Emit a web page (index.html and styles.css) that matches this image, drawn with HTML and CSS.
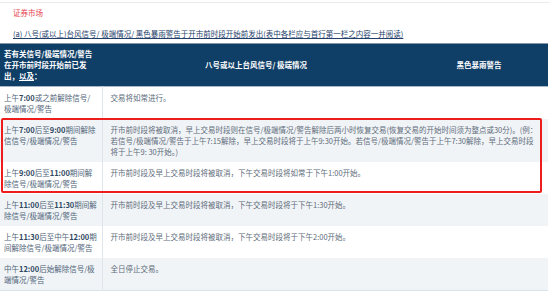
FILE: index.html
```html
<!DOCTYPE html>
<html lang="zh">
<head>
<meta charset="utf-8">
<link rel="stylesheet" href="styles.css">
</head>
<body>
<div class="page">
  <div class="title">证券市场</div>
  <div class="subtitle"><u>(a) 八号(或以上)台风信号/ 极端情况/ 黑色暴雨警告于开市前时段开始前发出(表中各栏应与首行第一栏之内容一并阅读)</u></div>
  <div class="table-wrap">
    <table class="grid">
      <colgroup><col class="c1"><col class="c2"><col class="c3"></colgroup>
      <thead>
        <tr>
          <th class="h-left">若有关信号/极端情况/警告<br>在开市前时段开始前已发<br>出，<u>以及</u>：</th>
          <th class="h-mid">八号或以上台风信号/ 极端情况</th>
          <th class="h-mid">黑色暴雨警告</th>
        </tr>
      </thead>
      <tbody>
        <tr>
          <td class="k">上午<b>7:00</b>或之前解除信号/<br>极端情况/警告</td>
          <td class="v" colspan="2">交易将如常进行。</td>
        </tr>
        <tr class="alt">
          <td class="k">上午<b>7:00</b>后至<b>9:00</b>期间解除<br>信信号/极端情况/警告</td>
          <td class="v" colspan="2">开市前时段将被取消，早上交易时段则在信号/极端情况/警告解除后两小时恢复交易(恢复交易的开始时间须为整点或30分)。(例：<br>若信号/极端情况/警告于上午7:15解除，早上交易时段将于上午9:30开始。若信号/极端情况/警告于上午7:30解除，早上交易时段<br>将于上午9: 30开始。)</td>
        </tr>
        <tr>
          <td class="k">上午<b>9:00</b>后至<b>11:00</b>期间解<br>除信号/极端情况/警告</td>
          <td class="v" colspan="2">开市前时段及早上交易时段将被取消，下午交易时段将如常于下午1:00开始。</td>
        </tr>
        <tr class="alt">
          <td class="k">上午<b>11:00</b>后至<b>11:30</b>期间解<br>除信号/极端情况/警告</td>
          <td class="v" colspan="2">开市前时段及早上交易时段将被取消，下午交易时段将于下午1:30开始。</td>
        </tr>
        <tr>
          <td class="k">上午<b>11:30</b>后至中午<b>12:00</b>期<br>间解除信号/极端情况/警告</td>
          <td class="v" colspan="2">开市前时段及早上交易时段将被取消，下午交易时段将于下午2:00开始。</td>
        </tr>
        <tr class="alt">
          <td class="k">中午<b>12:00</b>后始解除信号/极<br>端情况/警告</td>
          <td class="v" colspan="2">全日停止交易。</td>
        </tr>
      </tbody>
    </table>
    <div class="highlight"></div>
  </div>
</div>
</body>
</html>
```
FILE: styles.css
```css
html, body {
  margin: 0;
  padding: 0;
  background: #ffffff;
}
body {
  font-family: "Noto Sans CJK TC", "Noto Sans CJK SC", sans-serif;
  font-size: 7.5px;
  line-height: 11px;
}
.page {
  margin-top: 2px;
  border-top: 1px solid #ececec;
  width: 550px;
}
.title {
  color: #e8404f;
  padding: 4px 0 0 13px;
  height: 11px;
}
.subtitle {
  color: #24406a;
  padding: 10px 0 0 13px;
  height: 11px;
}
.subtitle u {
  text-decoration-thickness: 1px;
  text-underline-offset: 1px;
}
.table-wrap {
  position: relative;
  margin-top: 4px;
  width: 548px;
}
.grid {
  width: 548px;
  border-collapse: collapse;
  table-layout: fixed;
}
.c1 { width: 102px; }
.c2 { width: 308px; }
.c3 { width: 138px; }
thead tr {
  background: #0f3e67;
  border-top: 1px solid #7f96ad;
  border-bottom: 1px solid #a9b8c6;
}
th {
  color: #ffffff;
  font-weight: bold;
  padding: 4px 4px 5px;
  vertical-align: middle;
}
th u {
  text-underline-offset: 1px;
}
.h-left {
  text-align: left;
}
.h-mid {
  text-align: center;
}
tbody tr {
  background: #ffffff;
}
tbody tr.alt {
  background: #f1f4f7;
}
tbody tr:last-child {
  border-bottom: 1px solid #dbe3ea;
}
td {
  vertical-align: top;
  padding: 5px 4px;
  color: #5e6c7a;
}
td.k {
  color: #4f6478;
  border-right: 1px solid #dfe5eb;
}
td.k b {
  color: #2f4861;
}
td.v {
  padding-left: 8px;
  white-space: nowrap;
}
.highlight {
  position: absolute;
  left: 1px;
  top: 75px;
  width: 537px;
  height: 71px;
  border: 2px solid #ee1d1d;
  border-radius: 2px;
  pointer-events: none;
}
```
